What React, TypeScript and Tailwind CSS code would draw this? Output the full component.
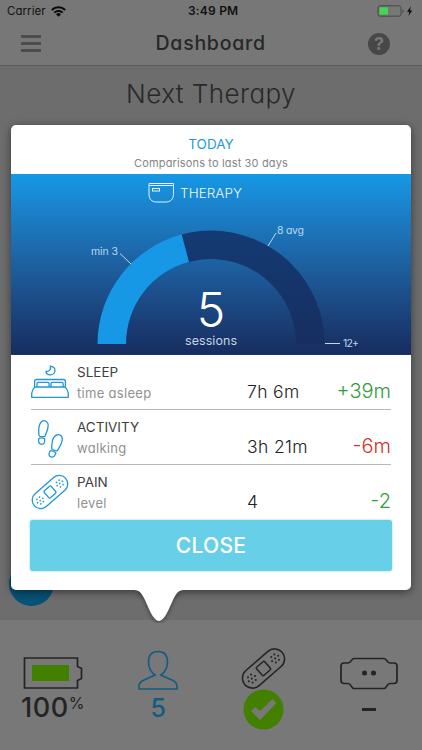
import type { ReactNode } from "react";

function Bandage({ className }: { className: string }) {
  return (
    <svg className={`overflow-visible ${className}`} viewBox="0 0 38 34" fill="none" stroke="currentColor" strokeWidth="1.3">
      <g transform="rotate(-41 19 17)">
        <rect x="-1.800" y="8.500" width="41.600" height="17" rx="8.500" />
        <rect x="14.400" y="12.400" width="9.200" height="9.200" rx="1.200" />
        <g fill="currentColor" stroke="none">
          {[6, 32].map((x) => (
            <g key={x}>
              <circle cx={x} cy="17" r=".85" />
              <circle cx={x - 3.4} cy="17" r=".85" />
              <circle cx={x + 3.4} cy="17" r=".85" />
              <circle cx={x - 1.7} cy="14" r=".85" />
              <circle cx={x + 1.7} cy="14" r=".85" />
              <circle cx={x - 1.7} cy="20" r=".85" />
              <circle cx={x + 1.7} cy="20" r=".85" />
            </g>
          ))}
        </g>
      </g>
    </svg>
  );
}

function Bed() {
  return (
    <svg className="h-[34px] w-[38px]" viewBox="0 0 38 34" fill="none" stroke="currentColor" strokeWidth="1.300" strokeLinejoin="round">
      <path d="M19.2 1.1c2.8.3 4.8 2.1 4.8 4.4a4.5 4.5 0 0 1-4.5 4.4c-2.6 0-4.4-1.5-4.6-3.5 2.6.6 5.6-1.6 4.3-5.3Z" />
      <path d="M3.600 22v-5.500c0-1.200.8-2 2-2h26.800c1.200 0 2 .8 2 2V22" />
      <path d="M6 22v-3.500c0-.8.4-1.200 1.200-1.200h9.700c.8 0 1.200.4 1.200 1.200V22M20 22v-3.500c0-.8.4-1.200 1.200-1.200h9.700c.8 0 1.200.4 1.200 1.200V22" />
      <path d="M4 22h30c2 1.600 3.100 3.900 3.300 6.400v3.900H.7v-3.900C.9 25.900 2 23.600 4 22Z" />
    </svg>
  );
}

function Steps() {
  return (
    <svg className="h-[38px] w-[38px]" viewBox="0 0 38 38" fill="none" stroke="currentColor" strokeWidth="1.300" strokeLinejoin="round">
      <path d="M8.200 15.800C7.300 12 7.400 4.500 10.400 1.700c2-1.900 5.500-1.100 6.500 1.900 1.300 4.100-1.500 8.100-2.600 12.200-.3 1.200-5.800 1.100-6.100 0Z" />
      <path d="M7.900 18.300c1.900-.5 3.900-.5 5.700 0 .5 3.600-.4 6-2.900 6-2.600 0-3.700-2.500-2.800-6Z" />
      <path d="M20.700 28.600c.2-4.200-.4-10.300 4.100-13.200 2.500-1.600 5.800-.5 6.400 2.500.8 4.600-2.400 8.300-4.700 12.500-.6 1.100-5.700-.4-5.800-1.800Z" />
      <path d="M19.500 30.700c2 .2 3.900 1 5.400 2-.7 3-2.500 5-4.800 4.300-2.500-.8-2.800-3.600-.6-6.300Z" />
    </svg>
  );
}

function Gauge() {
  return (
    <svg className="block h-[180px] w-full" viewBox="0 0 400 180">
      <defs>
        <linearGradient id="track" x1="0" y1="0" x2="0" y2="1">
          <stop stopColor="#133b73" />
          <stop offset="1" stopColor="#182e60" />
        </linearGradient>
      </defs>
      <path d="M86.500 170a113.500 113.500 0 0 1 227 0H285a85 85 0 0 0-170 0Z" fill="url(#track)" />
      <path d="M86.500 170A113.500 113.500 0 0 1 170.620 60.370L178 87.900A85 85 0 0 0 115 170Z" fill="#1698e6" />
      <path d="M109 79.500 120 90M257 72l8-13M314 169.500h15" stroke="#c3d9ec" fill="none" />
      <g fill="#b9d8ef" className="text-[10.500px]">
        <text x="80" y="81" textLength="27">min 3</text>
        <text x="266" y="60" textLength="27">8 avg</text>
        <text x="332" y="173" textLength="16">12+</text>
      </g>
      <g stroke="#e6f5ff" fill="none">
        <path d="M138.500 9.500h24v10c0 6-3 8.500-8 8.500h-9c-5 0-7.500-3-7.500-8V9.500ZM138.500 11.500h24" />
        <rect x="141.500" y="14.500" width="7" height="2.500" />
      </g>
      <text x="169" y="24" textLength="62" fill="#eef8ff" className="text-[13.500px] font-light">THERAPY</text>
      <text x="200" y="153" textAnchor="middle" fill="white" className="text-[48px] font-light">5</text>
      <text x="174" y="171" textLength="52" fill="#c5d3e5" className="text-[12.500px]">sessions</text>
    </svg>
  );
}

function Metric({ icon, name, detail, value, change, color, last }: { icon: ReactNode; name: string; detail: string; value: string; change: string; color: string; last?: boolean }) {
  return (
    <div className={`mx-5 flex h-[55px] ${last ? "" : "border-b border-[#b8b8b8]"}`}>
      <div className="flex w-[46px] items-start pt-[10px] text-[#2196d9]">{icon}</div>
      <div className="flex w-[170px] flex-col pt-[7px]">
        <span className="text-[13.500px] leading-[20px] text-[#414141]">{name}</span>
        <span className="text-[13px] leading-[22px] tracking-[0.300px] text-[#919191]">{detail}</span>
      </div>
      <span className="pt-[25px] text-[17.500px] leading-[24px] font-light tracking-[0.350px] text-[#222]">{value}</span>
      <span className={`ml-auto pt-[24px] text-[20px] leading-[24px] font-light ${color}`}>{change}</span>
    </div>
  );
}

export default function App() {
  return (
    <div className="relative flex h-[750px] w-[422px] flex-col overflow-hidden bg-[#6d6d6e] font-['Inter','Liberation_Sans',sans-serif] [font-feature-settings:'cv11']">
      <header className="h-[66px] border-b border-[#5c5c5c] bg-[#777]">
        <div className="flex h-[22px] items-center px-[7px] text-[11.500px] text-[#111]">
          <span className="w-[44px] pt-px tracking-[0.050px]">Carrier</span>
          <svg className="h-[11px] w-[15px]" viewBox="0 0 15 11" fill="none" stroke="#080808" strokeWidth="2">
            <path d="M.8 4a9.500 9.500 0 0 1 13.400 0M3.300 6.600a6 6 0 0 1 8.400 0" />
            <path d="M5 8.300a3.600 3.600 0 0 1 5 0L7.500 10.800Z" fill="#080808" stroke="none" />
          </svg>
          <span className="ml-[122px] text-[12px] font-semibold tracking-[0.200px]">3:49 PM</span>
          <svg className="ml-auto h-[12px] w-[38px]" viewBox="0 0 38 12">
            <rect x="1" y=".8" width="23" height="10.400" rx="2" fill="none" stroke="#484848" />
            <rect x="2.500" y="2.300" width="8.500" height="7.400" fill="#42d653" />
            <path d="M25.500 4v4c1.500-.5 1.500-3.500 0-4" fill="#484848" />
            <path d="m34 1.200-4 5.500h2.500L31.300 11l4-5.600h-2.500Z" fill="#080808" />
          </svg>
        </div>
        <div className="flex h-[43px] items-center pr-[32px] pl-[21px]">
          <div className="flex w-[22px] flex-col gap-[4.500px]">
            <i className="h-[2.800px] w-[20px] bg-[#4c4c4c]" />
            <i className="h-[2.800px] w-[20px] bg-[#4c4c4c]" />
            <i className="h-[2.800px] w-[20px] bg-[#4c4c4c]" />
          </div>
          <h1 className="ml-[112.500px] text-[19.500px] font-medium tracking-[0.750px] text-[#282828]">Dashboard</h1>
          <span className="ml-auto flex size-[22px] items-center justify-center rounded-full bg-[#474747] text-[18px] font-bold text-[#777]">?</span>
        </div>
      </header>
      <main className="h-[554px] bg-[#6d6d6e]">
        <h2 className="pt-[9px] text-center text-[26px] leading-[38px] font-light tracking-[0.450px] text-[#292929]">Next Therapy</h2>
      </main>
      <footer className="grid h-[130px] grid-cols-4 bg-[#787878] text-[#242424]">
        <div className="flex flex-col items-center pt-[36px]">
          <svg className="h-[34px] w-[60px]" viewBox="0 0 60 34">
            <path d="M1.500 2h53v8.500l4 2v10l-4 2V32h-53Z" fill="none" stroke="currentColor" strokeWidth="1.700" />
            <rect x="9" y="9" width="37" height="16" fill="#438000" />
          </svg>
          <div className="flex items-start text-[27px] leading-[36px] font-medium tracking-[0.600px]">100<span className="text-[16px] leading-[26px] font-normal tracking-normal">%</span></div>
        </div>
        <div className="flex flex-col items-center pt-[30px] text-[#125b85]">
          <svg className="h-[40px] w-[40px]" viewBox="0 0 40 40" fill="none" stroke="currentColor" strokeWidth="1.600">
            <path d="M17 25c-4-3-6.500-7.500-6.500-13C10.500 5 14 1.500 20 1.500S29.500 5 29.500 12c0 5.500-2.500 10-6.500 13l12 5.500c2.500 1.200 4 3.500 4 6v2.500H1v-2.500c0-2.500 1.500-4.800 4-6Z" />
          </svg>
          <span className="text-[25px] leading-[36px] font-medium">5</span>
        </div>
        <div className="flex flex-col items-center pt-[28px]">
          <Bandage className="h-[41px] w-[45px]" />
          <svg className="size-[41px]" viewBox="0 0 41 41">
            <circle cx="20.500" cy="20.500" r="20" fill="#438000" />
            <path d="m8 22 4-4 5 4L29.500 10l4 4L17 31Z" fill="#787878" />
          </svg>
        </div>
        <div className="flex flex-col items-center pt-[37px]">
          <svg className="h-[33px] w-[60px]" viewBox="0 0 60 33" fill="none" stroke="currentColor" strokeWidth="1.700">
            <path d="M15 1.500h30c3 0 2.500 4.500 6 4.500h4c2 0 3 1 3 3v14.500c0 2-1 3-3 3h-4c-3.500 0-3 5-6 5H15c-3 0-2.500-5-6-5H5c-2 0-3-1-3-3V9c0-2 1-3 3-3h4c3.500 0 3-4.500 6-4.500Z" />
            <path d="M25.500 16h.01M34.500 16h.01" strokeWidth="5" strokeLinecap="round" />
          </svg>
          <i className="mt-[18px] h-[2.500px] w-[14px] bg-current" />
        </div>
      </footer>

      <div className="absolute top-[561px] left-[9px] size-[45px] rounded-full bg-[#075277]" />
      <section className="absolute top-[125px] left-[11px] h-[465px] w-[400px] rounded-[5px] bg-white shadow-[0_2px_8px_#00000080]">
        <div className="flex h-[49px] flex-col items-center pt-[9px]">
          <span className="text-[13.500px] leading-[20px] text-[#2799dc]">TODAY</span>
          <span className="text-[11px] leading-[18px] tracking-[0.150px] text-[#858585]">Comparisons to last 30 days</span>
        </div>
        <div className="h-[181px] border-b border-[#19366b] bg-linear-to-b from-[#1598e6] to-[#172d60]"><Gauge /></div>
        <Metric icon={<Bed />} name="SLEEP" detail="time asleep" value="7h 6m" change="+39m" color="text-[#359b3d]" />
        <Metric icon={<Steps />} name="ACTIVITY" detail="walking" value="3h 21m" change="-6m" color="text-[#d5301f]" />
        <Metric icon={<Bandage className="h-[34px] w-[38px]" />} name="PAIN" detail="level" value="4" change="-2" color="text-[#359b3d]" last />
        <button className="mx-[19px] block h-[51px] w-[362px] rounded-[3px] bg-[#67cfe7] text-[21px] font-medium tracking-[0.300px] text-white shadow-[0_0_2px_#67cfe7]">CLOSE</button>
        <svg className="absolute top-[464px] left-[120px] h-[34px] w-[56px]" viewBox="0 0 56 34">
          <path d="M3 1h50c-6 0-8 4-11 10-3 6-8 21-14 21S17 17 14 11C11 5 9 1 3 1Z" fill="white" className="drop-shadow-[0_2px_2px_#00000066]" />
          <path d="M3 0h50v1H3Z" fill="white" />
        </svg>
      </section>
    </div>
  );
}
